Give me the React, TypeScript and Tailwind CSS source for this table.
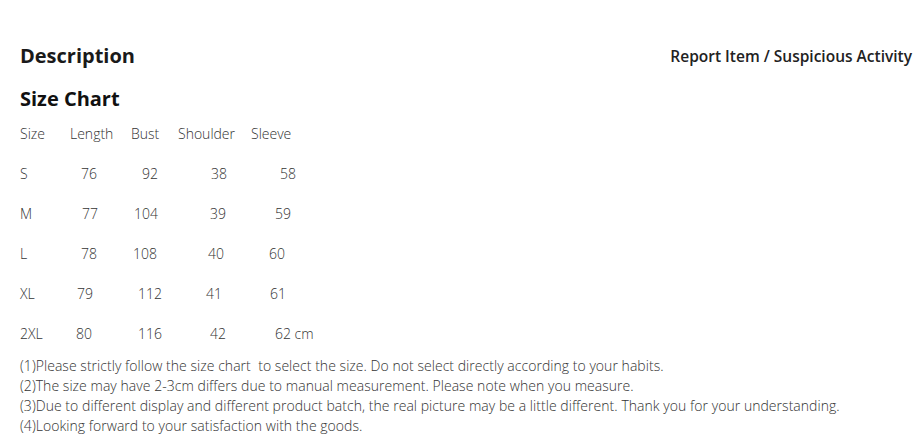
import React from "react";

const font = { fontFamily: '"Open Sans", "Noto Sans", sans-serif' };

const rows: { cells: string[]; w: string[] }[] = [
  { cells: ["Size", "Length", "Bust", "Shoulder", "Sleeve"], w: ["w-[50px]", "w-[61px]", "w-[47px]", "w-[73px]", ""] },
  { cells: ["S", "76", "92", "38", "58"], w: ["w-[61px]", "w-[61px]", "w-[69px]", "w-[69px]", ""] },
  { cells: ["M", "77", "104", "39", "59"], w: ["w-[62px]", "w-[52px]", "w-[76px]", "w-[65px]", ""] },
  { cells: ["L", "78", "108", "40", "60"], w: ["w-[61px]", "w-[52px]", "w-[75px]", "w-[61px]", ""] },
  { cells: ["XL", "79", "112", "41", "61"], w: ["w-[57px]", "w-[61px]", "w-[68px]", "w-[64px]", ""] },
  { cells: ["2XL", "80", "116", "42", "62 cm"], w: ["w-[56px]", "w-[62px]", "w-[72px]", "w-[65px]", ""] },
];

export default function App() {
  return (
    <div className="w-[917px] h-[439px] bg-white overflow-hidden" style={font}>
      <div className="pl-[20px] pr-[5px] pt-[42px]">
        <div className="flex h-[28px] items-center justify-between">
          <h2 className="text-[20px] font-bold text-[#1a1a1a] leading-[28px]">Description</h2>
          <span className="mt-[2px] text-[15.5px] font-semibold text-[#222]">Report Item / Suspicious Activity</span>
        </div>
        <h3 className="mt-[15px] h-[28px] text-[20px] font-bold text-[#111] leading-[28px]">Size Chart</h3>
        <div className="text-[14px] font-light text-[#333]">
          {rows.map((r, i) => (
            <div key={i} className="flex h-[40px] items-center">
              {r.cells.map((c, j) => (
                <span key={j} className={`shrink-0 ${r.w[j]}`}>
                  {c}
                </span>
              ))}
            </div>
          ))}
        </div>
        <div className="mt-[3px] text-[14px] font-light leading-[20px] text-[#333] tracking-[0.04px]">
          <p>(1)Please strictly follow the size chart&nbsp; to select the size. Do not select directly according to your habits.</p>
          <p>(2)The size may have 2-3cm differs due to manual measurement. Please note when you measure.</p>
          <p>(3)Due to different display and different product batch, the real picture may be a little different. Thank you for your understanding.</p>
          <p>(4)Looking forward to your satisfaction with the goods.</p>
        </div>
      </div>
    </div>
  );
}
